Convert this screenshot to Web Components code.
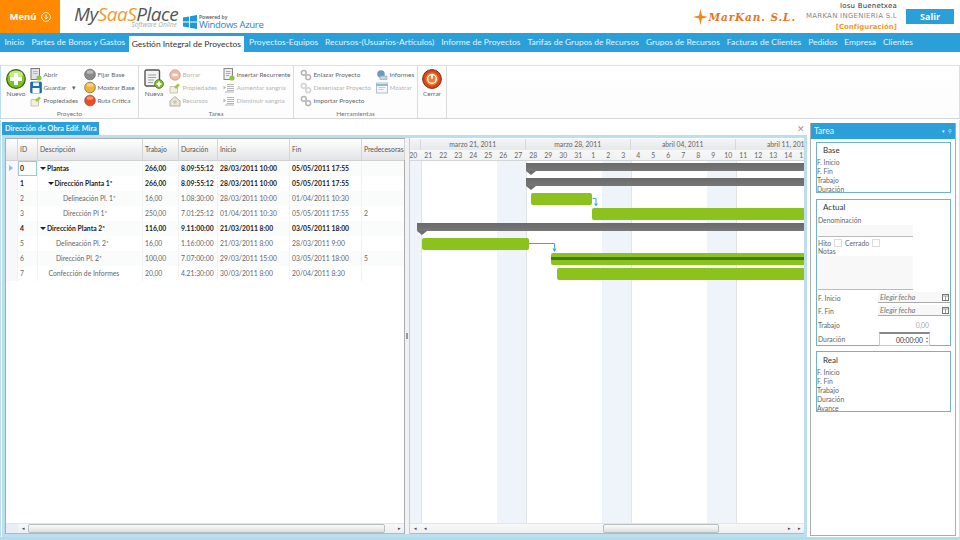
<!DOCTYPE html>
<html lang="es">
<head>
<meta charset="utf-8">
<title>MySaaSPlace</title>
<style>
  html, body { margin: 0; height: 540px; overflow: hidden; background: #fff; }
  body { font-family: Lato, "Open Sans", "Liberation Sans", sans-serif; display: flex; flex-direction: column; width: 960px; }
  #work { display: flex; height: 417px; flex: none; background: #fff; border-left: 1px solid #bcdff0; border-right: 1px solid #cfe3ee; padding-right: 2px; box-sizing: border-box; }
  #foot { height: 3px; flex: none; background: #b5dcea; }
</style>
</head>
<body>
<app-header></app-header>
<app-nav active="Gestión Integral de Proyectos"></app-nav>
<app-ribbon></app-ribbon>
<div id="work">
  <doc-area></doc-area>
  <task-panel></task-panel>
</div>
<div id="foot"></div>
<script>
// iconos del ribbon, dibujados a 12x12 o 20x20
const ICONS = {
  plus: `<svg width="20" height="20" viewBox="0 0 20 20"><circle cx="10" cy="10" r="9.3" fill="#7fc31c" stroke="#2f5f14" stroke-width="1.2"/><ellipse cx="10" cy="5.5" rx="7" ry="3.8" fill="#c4ea80"/><path d="M8 4h4v4h4v4h-4v4H8v-4H4V8h4z" fill="#fff"/></svg>`,
  page: `<svg width="20" height="20" viewBox="0 0 20 20"><rect x="1" y="1" width="14.5" height="16" rx="1.5" fill="#f3f3f3" stroke="#555" stroke-width="1.4"/><path d="M4 6h8M4 8.5h8M4 11h6M4 13.5h5" stroke="#999" stroke-width=".9"/><circle cx="15" cy="15" r="4.4" fill="#7fc31c" stroke="#3d7516" stroke-width=".8"/><path d="M14 12.6h2V14h1.4v2H16v1.4h-2V16h-1.4v-2H14z" fill="#fff"/></svg>`,
  power: `<svg width="20" height="20" viewBox="0 0 20 20"><circle cx="10" cy="10" r="9.4" fill="#d8481a" stroke="#7d2d12" stroke-width="1"/><circle cx="10" cy="10" r="6.4" fill="#ef7d32"/><circle cx="10" cy="10" r="4.3" fill="none" stroke="#fff" stroke-width="1.3"/><path d="M10 5v5" stroke="#fff" stroke-width="1.6"/></svg>`,
  doc: `<svg width="12" height="13" viewBox="0 0 12 13"><rect x="1" y=".5" width="8.5" height="11" fill="#dfe3e6" stroke="#777"/><path d="M3 3.5h4.500M3 5.5h4.500" stroke="#aaa" stroke-width=".8"/><circle cx="9" cy="10" r="2.6" fill="#8cc63f"/></svg>`,
  save: `<svg width="12" height="13" viewBox="0 0 12 13"><rect x=".5" y="1" width="11" height="11" rx="1" fill="#1b6fb0" stroke="#134f80" stroke-width=".6"/><rect x="3" y="1.5" width="6" height="3.5" fill="#e8f2fa"/><rect x="2.5" y="7" width="7" height="5" fill="#fff"/></svg>`,
  props: `<svg width="12" height="12" viewBox="0 0 12 12"><path d="M1 4.5h7.500V11H1z" fill="#f2eee0" stroke="#b9b39a" stroke-width=".7"/><path d="M5 5l4-3.500 2 1.800-4 3.700z" fill="#9ccb3f"/></svg>`,
  ball: c => `<svg width="13" height="13" viewBox="0 0 13 13"><circle cx="6.5" cy="6.5" r="5.8" fill="${c}" stroke="#666" stroke-width=".8"/><ellipse cx="6.5" cy="3.8" rx="3.6" ry="2" fill="#fff" opacity=".4"/></svg>`,
  del: `<svg width="12" height="12" viewBox="0 0 12 12"><circle cx="6" cy="6" r="5.2" fill="#f1b9a4" stroke="#d8a391"/><path d="M3.5 4.800h5v2.400h-5z" fill="#fff"/></svg>`,
  users: `<svg width="12" height="12" viewBox="0 0 12 12"><path d="M1 6L6 1.500 11 6v5H1z" fill="#eee5cf" stroke="#a59d8b" stroke-width=".8"/><circle cx="6" cy="7" r="1.8" fill="#b8c9d6"/></svg>`,
  recur: `<svg width="12" height="13" viewBox="0 0 12 13"><rect x="1" y=".5" width="8.5" height="11" fill="#eee" stroke="#888"/><path d="M3 3.500h4.500M3 5.500h4.500M3 7.500h3" stroke="#999" stroke-width=".8"/><circle cx="9" cy="10" r="2.6" fill="#8cc63f"/></svg>`,
  indent: `<svg width="12" height="12" viewBox="0 0 12 12"><path d="M4 2.500h7M4 4.500h7M4 6.500h7M4 8.500h7M2 10h9" stroke="#b5b5b5"/><path d="M.5 3.500l2.500 2-2.500 2z" fill="#b5b5b5"/></svg>`,
  link: `<svg width="12" height="12" viewBox="0 0 12 12"><g fill="none" stroke="#b5b5b5" stroke-width="1.5"><circle cx="3.8" cy="3.8" r="2.4"/><circle cx="8.2" cy="8.2" r="2.4"/></g></svg>`,
  unlink: `<svg width="12" height="12" viewBox="0 0 12 12"><g fill="none" stroke="#d2d2d2" stroke-width="1.5"><circle cx="3.8" cy="3.8" r="2.4"/><circle cx="8.2" cy="8.2" r="2.4"/></g></svg>`,
  report: `<svg width="12" height="12" viewBox="0 0 12 12"><circle cx="5" cy="5" r="3.8" fill="#6a9dbd"/><path d="M4 7h7v3.500H4z" fill="#c9d6df" stroke="#8ca0ae" stroke-width=".6"/></svg>`,
  show: `<svg width="12" height="12" viewBox="0 0 12 12"><rect x=".5" y="1" width="11" height="10" fill="#f4f7fa" stroke="#a9c1d3"/><path d="M.5 3h11" stroke="#7fa9c8" stroke-width="1.6"/><path d="M2.500 5.500h7M2.500 7.500h5" stroke="#b9c7d2" stroke-width=".8"/></svg>`
};

class AppHeader extends HTMLElement {
  constructor() {
    super();
    this.attachShadow({ mode: 'open' });
    this.shadowRoot.innerHTML = `
      <style>
        :host { display: flex; height: 33px; align-items: stretch; background: #fff; flex: none; }
        .menu { width: 60px; background: #ff8a00; color: #fff; font: 700 9.5px "Open Sans", sans-serif; display: flex; align-items: center; justify-content: center; gap: 4px; }
        .logo { margin-left: 14px; width: 105px; }
        .brand { font: italic 400 19px/1 "Open Sans", sans-serif; letter-spacing: -.5px; color: #555; margin-top: 5px; white-space: nowrap; }
        .brand b { font-weight: 400; color: #f59a2c; }
        .online { font: italic 400 6.5px/1 "Open Sans", sans-serif; color: #aaa; text-align: right; margin: -2px 2px 0 0; white-space: nowrap; }
        .azure { display: flex; gap: 2px; margin-left: 4px; padding-top: 15px; }
        .azure div { color: #2f7fc0; }
        .pw { font: 600 5px/5px "Open Sans", sans-serif; color: #555 !important; }
        .az { font: 400 9.5px/9px "Open Sans", sans-serif; letter-spacing: -.3px; white-space: nowrap; }
        .right { margin-left: auto; display: flex; align-items: center; }
        .mk { display: flex; align-items: center; color: #e5761f; margin-right: 10px; }
        .mk span { font: italic 700 10.5px "DejaVu Serif", serif; letter-spacing: .9px; white-space: nowrap; }
        .user { text-align: right; font: 400 7px/10.5px "DejaVu Sans", sans-serif; white-space: nowrap; color: #333; }
        .user .nm { letter-spacing: .2px; }
        .user .co { color: #888; letter-spacing: .25px; }
        .user .cfg { color: #f59a2c; font-weight: 700; }
        .salir { width: 48px; height: 15px; margin: 0 6px 0 9px; background: #2a9fd8; color: #fff; font: 700 9px/15px "Open Sans", sans-serif; text-align: center; }
      </style>
      <div class="menu">Menú
        <svg width="10" height="10" viewBox="0 0 10 10"><circle cx="5" cy="5" r="4.4" fill="none" stroke="#fff" stroke-width=".8"/><path d="M5 2.500V7M3 5l2 2 2-2" fill="none" stroke="#fff" stroke-width=".8"/></svg>
      </div>
      <div class="logo">
        <div class="brand">My<b>SaaS</b>Place</div>
        <div class="online">Software Online</div>
      </div>
      <div class="azure">
        <svg width="14" height="14" viewBox="0 0 14 14"><path d="M0 2.500l6-1v5H0zM7 1.300L14 0v6.500H7zM0 7.500h6v5l-6-1zM7 7.500h7V14l-7-1.300z" fill="#1c9ad6"/></svg>
        <div><div class="pw">Powered by</div><div class="az">Windows Azure</div></div>
      </div>
      <div class="right">
        <div class="mk">
          <svg width="15" height="16" viewBox="0 0 15 16"><path d="M7.500 0L9 6.500 15 8 9 9.500 7.500 16 6 9.500 0 8l6-1.500z" fill="#f08a24"/></svg>
          <span>MarKan. S.L.</span>
        </div>
        <div class="user">
          <div class="nm">Iosu Buenetxea</div>
          <div class="co">MARKAN INGENIERIA S.L</div>
          <div class="cfg">[Configuración]</div>
        </div>
        <div class="salir">Salir</div>
      </div>`;
  }
}

class AppNav extends HTMLElement {
  static get observedAttributes() { return ['active']; }
  constructor() {
    super();
    this.attachShadow({ mode: 'open' });
  }
  attributeChangedCallback() { this.render(); }
  connectedCallback() { this.render(); }
  render() {
    const items = ['Inicio', 'Partes de Bonos y Gastos', 'Gestión Integral de Proyectos', 'Proyectos-Equipos', 'Recursos-(Usuarios-Artículos)', 'Informe de Proyectos', 'Tarifas de Grupos de Recursos', 'Grupos de Recursos', 'Facturas de Clientes', 'Pedidos', 'Empresa', 'Clientes'];
    const active = this.getAttribute('active');
    this.shadowRoot.innerHTML = `
      <style>
        :host { display: flex; height: 19px; background: #2a9fd8; padding-left: 1px; flex: none; }
        a { color: #e6f4fb; font: 400 8.45px/19px Lato, sans-serif; padding: 0 3.5px; white-space: nowrap; }
        a.on { background: #fff; color: #333; margin: 3px 1.5px 0 0; line-height: 16px; padding: 0 3px; }
      </style>
      ${items.map(i => `<a class="${i === active ? 'on' : ''}">${i}</a>`).join('')}`;
  }
}

class RbGroup extends HTMLElement {
  constructor() {
    super();
    this.attachShadow({ mode: 'open' });
    this.shadowRoot.innerHTML = `
      <style>
        :host { display: flex; flex-direction: column; flex: none; border-right: 1px solid #dcdcdc; box-sizing: border-box; height: 100%; }
        .body { flex: 1; display: flex; }
        .lbl { height: 9px; font-size: 6.5px; line-height: 9px; color: #777; text-align: center; }
      </style>
      <div class="body"><slot></slot></div>
      <div class="lbl">${this.getAttribute('label') || ''}</div>`;
  }
}

class RbBig extends HTMLElement {
  constructor() {
    super();
    this.attachShadow({ mode: 'open' });
    this.shadowRoot.innerHTML = `
      <style>
        :host { display: flex; flex-direction: column; align-items: center; flex: none; width: 24px; padding-top: 3px; font-size: 6.5px; color: #666; }
        svg { display: block; }
        div { line-height: 10px; }
      </style>
      ${ICONS[this.getAttribute('icon')]}
      <div>${this.getAttribute('label')}</div>`;
  }
}

class RbCol extends HTMLElement {
  constructor() {
    super();
    this.attachShadow({ mode: 'open' });
    this.shadowRoot.innerHTML = `
      <style>:host { display: flex; flex-direction: column; flex: none; padding-top: 2px; }</style>
      <slot></slot>`;
  }
}

class RbSmall extends HTMLElement {
  constructor() {
    super();
    this.attachShadow({ mode: 'open' });
    const icon = this.getAttribute('icon');
    const svg = icon.startsWith('#') ? ICONS.ball(icon) : ICONS[icon];
    const off = this.hasAttribute('off');
    this.shadowRoot.innerHTML = `
      <style>
        :host { display: flex; align-items: center; gap: 1.5px; height: 13px; font-size: 6.4px; color: ${off ? '#b4b4b4' : '#666'}; white-space: nowrap; }
        span.i { width: 12px; height: 13px; display: flex; align-items: center; flex: none; }
        em { font-style: normal; font-size: 7px; color: #666; margin-left: 4px; }
      </style>
      <span class="i">${svg}</span><span>${this.getAttribute('label')}</span>${this.hasAttribute('drop') ? '<em>▾</em>' : ''}`;
  }
}

class AppRibbon extends HTMLElement {
  constructor() {
    super();
    this.attachShadow({ mode: 'open' });
    this.shadowRoot.innerHTML = `
      <style>
        :host { display: block; flex: none; padding-top: 13px; background: #fff; height: 55px; }
        .bar { display: flex; height: 54px; box-sizing: border-box; border-top: 1px solid #dfdfdf; border-bottom: 1px solid #d6d6d6; border-left: 1px solid #bcdff0; border-right: 1px solid #cfe3ee; background: linear-gradient(#fff, #fcfcfc); }
      </style>
      <div class="bar">
        <rb-group label="Proyecto" style="width:138px">
          <rb-big icon="plus" label="Nuevo" style="margin-left:3px"></rb-big>
          <rb-col style="margin-left:2px;width:54px">
            <rb-small icon="doc" label="Abrir"></rb-small>
            <rb-small icon="save" label="Guardar" drop></rb-small>
            <rb-small icon="props" label="Propiedades"></rb-small>
          </rb-col>
          <rb-col>
            <rb-small icon="#8b8b8b" label="Fijar Base"></rb-small>
            <rb-small icon="#f6b42e" label="Mostrar Base"></rb-small>
            <rb-small icon="#ef4b1c" label="Ruta Crítica"></rb-small>
          </rb-col>
        </rb-group>
        <rb-group label="Tarea" style="width:155px">
          <rb-big icon="page" label="Nueva" style="margin-left:3px"></rb-big>
          <rb-col style="margin-left:3px;width:54px">
            <rb-small icon="del" label="Borrar" off></rb-small>
            <rb-small icon="props" label="Propiedades" off></rb-small>
            <rb-small icon="users" label="Recursos" off></rb-small>
          </rb-col>
          <rb-col>
            <rb-small icon="recur" label="Insertar Recurrente"></rb-small>
            <rb-small icon="indent" label="Aumentar sangría" off></rb-small>
            <rb-small icon="indent" label="Disminuir sangría" off></rb-small>
          </rb-col>
        </rb-group>
        <rb-group label="Herramientas" style="width:124px">
          <rb-col style="margin-left:6px;width:76px">
            <rb-small icon="link" label="Enlazar Proyecto"></rb-small>
            <rb-small icon="unlink" label="Desenlazar Proyecto" off></rb-small>
            <rb-small icon="link" label="Importar Proyecto"></rb-small>
          </rb-col>
          <rb-col>
            <rb-small icon="report" label="Informes"></rb-small>
            <rb-small icon="show" label="Mostrar" off></rb-small>
          </rb-col>
        </rb-group>
        <rb-group style="width:29px">
          <rb-big icon="power" label="Cerrar" style="margin-left:2px"></rb-big>
        </rb-group>
      </div>`;
  }
}

class HScroll extends HTMLElement {
  constructor() {
    super();
    this.attachShadow({ mode: 'open' });
    const before = +this.getAttribute('before') || 0;
    const thumb = +this.getAttribute('thumb') || 100;
    const lead = +this.getAttribute('lead') || 0;
    const double = this.hasAttribute('double');
    this.shadowRoot.innerHTML = `
      <style>
        :host { display: flex; height: 11px; flex: none; align-items: stretch; background: linear-gradient(#f7f8f9, #eceef0); border-top: 1px solid #e4e4e4; border-bottom: 1px solid #b4b9bd; box-sizing: border-box; }
        .lead { width: ${lead}px; background: #e9edf5; flex: none; }
        .arr { width: 10px; flex: none; font-size: 5px; line-height: 9px; text-align: center; color: #444; }
        .track { flex: 1; position: relative; }
        .thumb { position: absolute; top: 0; bottom: 0; left: ${before}px; width: ${thumb}px; background: linear-gradient(#fbfbfb, #dcdfe1); border: 1px solid #b9bdc0; border-radius: 2px; box-sizing: border-box; }
      </style>
      <div class="lead"></div>
      ${double ? '<div class="arr">◂</div>' : ''}<div class="arr">◂</div>
      <div class="track"><div class="thumb"></div></div>
      <div class="arr">▸</div>${double ? '<div class="arr">▸</div>' : ''}`;
  }
}

class TaskGrid extends HTMLElement {
  constructor() {
    super();
    this.attachShadow({ mode: 'open' });
    const tasks = [
      ['0', 'Plantas', 1, 2, '266,00', '8.09:55:12', '28/03/2011 10:00', '05/05/2011 17:55', ''],
      ['1', 'Dirección Planta 1ª', 1, 9.5, '266,00', '8.09:55:12', '28/03/2011 10:00', '05/05/2011 17:55', ''],
      ['2', 'Delineación Pl. 1ª', 0, 25, '16,00', '1.08:30:00', '28/03/2011 10:00', '01/04/2011 10:30', ''],
      ['3', 'Dirección Pl 1ª', 0, 25, '250,00', '7.01:25:12', '01/04/2011 10:30', '05/05/2011 17:55', '2'],
      ['4', 'Dirección Planta 2ª', 1, 2, '116,00', '9.11:00:00', '21/03/2011 8:00', '03/05/2011 18:00', ''],
      ['5', 'Delineación Pl. 2ª', 0, 18, '16,00', '1.16:00:00', '21/03/2011 8:00', '28/03/2011 9:00', ''],
      ['6', 'Dirección Pl. 2ª', 0, 18, '100,00', '7.07:00:00', '29/03/2011 15:00', '03/05/2011 18:00', '5'],
      ['7', 'Confección de Informes', 0, 10.5, '20,00', '4.21:30:00', '30/03/2011 8:00', '20/04/2011 8:30', '']
    ];
    this.shadowRoot.innerHTML = `
      <style>
        :host { display: flex; flex-direction: column; width: 400px; flex: none; border: 1px solid #a9adb0; border-bottom: 0; box-sizing: border-box; background: #fff; font-size: 6.8px; color: #666; }
        .body { flex: 1; overflow: hidden; }
        .row { display: grid; grid-template-columns: 12px 20px 105px 36px 39px 72px 72px 43px; height: 15px; line-height: 15px; white-space: nowrap; }
        .row.alt { background: #fafbfb; }
        .row.sum { font-weight: 700; color: #222; }
        .row > div { padding-left: 2px; overflow: hidden; border-right: 1px solid #f2f2f2; }
        .head { height: 22px; line-height: 21px; background: linear-gradient(#fff, #e3e4e6); border-bottom: 1px solid #cfd1d3; box-sizing: border-box; color: #555; }
        .head > div { border-right: 1px solid #d3d5d7; }
        .ind { background: #f7f8f9; padding: 0 !important; position: relative; }
        .head .ind { background: transparent; }
        .sel { color: #222; box-shadow: inset 0 0 0 1px #9cc7d4; }
        .sel2 { position: absolute; left: 3px; top: 4px; border: 3.5px solid transparent; border-left: 4px solid #7cc0e4; }
        .desc i { display: inline-block; border: 3px solid transparent; border-top: 3px solid #222; border-bottom: 0; width: 0; margin-right: 1px; vertical-align: 1px; }
      </style>
      <div class="row head">
        <div class="ind"></div><div>ID</div><div>Descripción</div><div>Trabajo</div><div>Duración</div><div>Inicio</div><div>Fin</div><div>Predecesoras</div>
      </div>
      <div class="body">
        ${tasks.map((t, n) => `
          <div class="row ${t[2] ? 'sum' : ''} ${n % 2 == 0 ? 'alt' : ''}">
            <div class="ind">${n === 0 ? '<span class="sel2"></span>' : ''}</div>
            <div class="${n === 0 ? 'sel' : ''}">${t[0]}</div>
            <div class="desc" style="padding-left:${t[3]}px">${t[2] ? '<i></i>' : ''}${t[1]}</div>
            <div>${t[4]}</div><div>${t[5]}</div><div>${t[6]}</div><div>${t[7]}</div><div>${t[8]}</div>
          </div>`).join('')}
      </div>
      <h-scroll lead="12" before="0" thumb="357"></h-scroll>`;
  }
}

class GanttChart extends HTMLElement {
  constructor() {
    super();
    this.attachShadow({ mode: 'open' });
    const X0 = 410;
    const weeks = [[420.7, 'marzo 21, 2011'], [525.7, 'marzo 28, 2011'], [630.7, 'abril 04, 2011'], [735.7, 'abril 11, 2011']];
    const days = [20, 21, 22, 23, 24, 25, 26, 27, 28, 29, 30, 31, 1, 2, 3, 4, 5, 6, 7, 8, 9, 10, 11, 12, 13, 14, 15, 16];
    const bands = [[410, 10.7], [496.7, 29], [601.7, 29], [706.7, 29]];
    const lines = [420.7, 525.7, 630.7, 735.7];
    const bars = [
      ['sum', 526, 162.5, 280], ['sum', 526, 177.5, 280], ['task', 530.5, 192.5, 61.5],
      ['task', 592, 207.5, 213], ['sum', 417, 222.5, 388], ['task', 422, 237.5, 106.5],
      ['task prog', 551, 252.5, 254], ['task', 557, 267.5, 248]
    ];
    const Y0 = 161;
    this.shadowRoot.innerHTML = `
      <style>
        :host { display: flex; flex-direction: column; flex: 1; min-width: 0; overflow: hidden; border-left: 1px solid #c8cbce; border-right: 3px solid #bcdff0; box-sizing: border-box; background: #fff; font-size: 6.8px; color: #666; }
        .hdr { height: 23px; flex: none; position: relative; overflow: hidden; background: linear-gradient(#fff, #f0f1f2); border-bottom: 1px solid #d3d5d7; box-sizing: border-box; }
        .mon { position: absolute; top: 1px; height: 11px; width: 105px; line-height: 11px; text-align: center; border-right: 1px solid #d6d8da; box-sizing: border-box; white-space: nowrap; background: linear-gradient(#f3f4f5, #e7e8ea); }
        .days { position: absolute; left: ${405.7 - X0}px; top: 12px; display: flex; height: 10px; }
        .days span { width: 15px; line-height: 10px; text-align: center; flex: none; }
        .canvas { flex: 1; position: relative; overflow: hidden; }
        .band { position: absolute; top: 0; bottom: 0; background: #eff3fa; }
        .ln { position: absolute; top: 0; bottom: 0; width: 1px; background: #e2e3e5; }
        .bar { position: absolute; box-sizing: border-box; }
        .task { height: 12.5px; background: #8cc21e; border-radius: 2px; }
        .prog::after { content: ""; position: absolute; left: 0; right: 0; top: 4.5px; height: 3px; background: #3f7d0c; }
        .sum { height: 8.5px; background: linear-gradient(#6a6a6a, #777); }
        .sum::after { content: ""; position: absolute; left: 0; top: 8.5px; border-left: 5.5px solid transparent; border-right: 5.5px solid transparent; border-top: 4px solid #6e6e6e; }
        svg { position: absolute; left: 0; top: 0; }
      </style>
      <div class="hdr">
        <div class="mon" style="left:${315.7 - X0}px"></div>
        ${weeks.map(w => `<div class="mon" style="left:${w[0] - X0}px">${w[1]}</div>`).join('')}
        <div class="days">${days.map(d => `<span>${d}</span>`).join('')}</div>
      </div>
      <div class="canvas">
        ${bands.map(b => `<div class="band" style="left:${b[0] - X0}px;width:${b[1]}px"></div>`).join('')}
        ${lines.map(l => `<div class="ln" style="left:${l - X0}px"></div>`).join('')}
        ${bars.map(b => `<div class="bar ${b[0]}" style="left:${b[1] - X0}px;top:${b[2] - Y0}px;width:${b[3]}px"></div>`).join('')}
        <svg width="395" height="130" fill="none">
          <path d="M182.5 37.500h3.500v5" stroke="#3ea6d8"/><path d="M184 42.500h4l-2 3z" fill="#3ea6d8"/>
          <path d="M118.500 82.500h26v5" stroke="#3ea6d8"/><path d="M142.500 87.500h4l-2 3.500z" fill="#3ea6d8"/>
        </svg>
      </div>
      <h-scroll double before="173" thumb="116"></h-scroll>`;
  }
}

class DocArea extends HTMLElement {
  constructor() {
    super();
    this.attachShadow({ mode: 'open' });
    this.shadowRoot.innerHTML = `
      <style>
        :host { display: flex; flex-direction: column; width: 809px; height: 417px; flex: none; box-sizing: border-box; padding: 2px 3px 0 1px; background: #fff; }
        .tabs { display: flex; align-items: flex-end; height: 13px; flex: none; }
        .tab { width: 97px; height: 13px; background: #2a9fd8; color: #eaf6fc; font: 700 7.3px/13px Lato, sans-serif; padding-left: 3px; box-sizing: border-box; overflow: hidden; white-space: nowrap; }
        .x { margin-left: auto; margin-right: 2px; align-self: center; color: #999; font-size: 9px; line-height: 13px; }
        .frame { flex: 1; display: flex; min-height: 0; border: solid #bcdff0; border-width: 3px 0 3px 3px; box-sizing: border-box; }
        .split { width: 4px; flex: none; display: flex; align-items: center; justify-content: center; background: #f1f2f3; }
        .grip { width: 2px; height: 6px; background: #999; }
      </style>
      <div class="tabs"><div class="tab">Dirección de Obra Edif. Mira</div><div class="x">✕</div></div>
      <div class="frame">
        <task-grid></task-grid>
        <div class="split"><div class="grip"></div></div>
        <gantt-chart></gantt-chart>
      </div>`;
  }
}

class FormBox extends HTMLElement {
  constructor() {
    super();
    this.attachShadow({ mode: 'open' });
    this.shadowRoot.innerHTML = `
      <style>
        :host { display: block; box-sizing: border-box; border: 1px solid #6fb5c8; font-size: 6.8px; color: #666; flex: none; }
        h4 { margin: 0; font: 400 8px/10px Lato, sans-serif; color: #333; padding: 2px 0 3px 6px; }
      </style>
      <h4>${this.getAttribute('title')}</h4>
      <slot></slot>`;
  }
}

class TaskPanel extends HTMLElement {
  constructor() {
    super();
    this.attachShadow({ mode: 'open' });
    this.shadowRoot.innerHTML = `
      <style>
        :host { display: flex; flex-direction: column; width: 146px; height: 413px; flex: none; margin-top: 3px; border: solid #a9adb0; border-width: 0 1px 1px 1px; box-sizing: border-box; font-size: 6.8px; color: #666; background: #fff; }
        .hd { height: 16px; flex: none; background: #2a9fd8; color: #eaf6fc; font: 400 8.5px/16px Lato, sans-serif; padding-left: 3px; display: flex; }
        .hd span { margin-left: auto; margin-right: 3px; font-size: 5px; }
        .boxes { display: flex; flex-direction: column; padding: 3px 4px 0 5px; }
        .ln { line-height: 9px; height: 9px; white-space: nowrap; }
        .base { height: 51px; }
        .actual { height: 147px; margin-top: 6px; }
        .real { height: 61px; margin-top: 5px; padding-top: 1px; }
        .pad { padding-left: 1px; }
        .in { background: #f8f8f8; border-bottom: 1px solid #bbb; box-sizing: border-box; margin-left: 1px; width: 95px; }
        .check { display: flex; align-items: center; height: 9px; margin-left: 1px; gap: 3px; margin-top: 1px; }
        .cb { width: 8px; height: 8px; border: 1px solid #ddd; box-sizing: border-box; background: #fff; }
        .f { display: flex; align-items: center; padding-left: 1px; }
        .f > span { width: 60px; flex: none; }
        .date { width: 72px; height: 11px; background: #f8f8f8; border-bottom: 1px solid #aaa; box-sizing: border-box; font-style: italic; font-size: 7.4px; line-height: 11px; padding-left: 2px; display: flex; justify-content: space-between; color: #777; }
        .date svg { margin: 1px 1px 0 0; }
        .time { width: 51px; height: 14px; margin-left: 1px; border: 1px solid #ccc; border-top: 2px solid #888; box-sizing: border-box; background: #fff; color: #333; display: flex; align-items: center; justify-content: flex-end; }
        .spin { width: 5px; margin-left: 1px; font-size: 4px; line-height: 4px; color: #777; text-align: center; }
      </style>
      <div class="hd">Tarea<span>▾ &nbsp;⚲</span></div>
      <div class="boxes">
        <form-box class="base" title="Base">
          <div class="ln">F. Inicio</div><div class="ln">F. Fin</div><div class="ln">Trabajo</div><div class="ln">Duración</div>
        </form-box>
        <form-box class="actual" title="Actual">
          <div class="ln pad" style="margin-top:1px">Denominación</div>
          <div class="in" style="height:12px"></div>
          <div class="check"><span>Hito</span><span class="cb"></span><span>Cerrado</span><span class="cb"></span></div>
          <div class="ln pad">Notas</div>
          <div class="in" style="height:34px"></div>
          <div class="f" style="margin-top:2px;height:11px"><span>F. Inicio</span><div class="date">Elegir fecha${this.cal()}</div></div>
          <div class="f" style="margin-top:2px;height:11px"><span>F. Fin</span><div class="date">Elegir fecha${this.cal()}</div></div>
          <div class="f" style="margin-top:3px;height:11px"><span>Trabajo</span><div style="width:51px;margin-left:1px;text-align:right;padding-right:1px;box-sizing:border-box;color:#aaa">0,00</div></div>
          <div class="f" style="margin-top:2px;height:14px"><span>Duración</span><div class="time">00:00:00<div class="spin">▴<br>▾</div></div></div>
        </form-box>
        <form-box class="real" title="Real">
          <div class="ln">F. Inicio</div><div class="ln">F. Fin</div><div class="ln">Trabajo</div><div class="ln">Duración</div><div class="ln">Avance</div>
        </form-box>
      </div>`;
  }
  cal() {
    return `<svg width="7" height="8" viewBox="0 0 7 8"><rect x=".5" y="1.5" width="6" height="6" fill="#fff" stroke="#777"/><path d="M.5 3h6M3.5 3v4" stroke="#777" stroke-width=".7"/></svg>`;
  }
}

// 先註冊子元件再註冊容器
customElements.define('rb-group', RbGroup);
customElements.define('rb-big', RbBig);
customElements.define('rb-col', RbCol);
customElements.define('rb-small', RbSmall);
customElements.define('h-scroll', HScroll);
customElements.define('task-grid', TaskGrid);
customElements.define('gantt-chart', GanttChart);
customElements.define('form-box', FormBox);
customElements.define('app-header', AppHeader);
customElements.define('app-nav', AppNav);
customElements.define('app-ribbon', AppRibbon);
customElements.define('doc-area', DocArea);
customElements.define('task-panel', TaskPanel);
</script>
</body>
</html>
